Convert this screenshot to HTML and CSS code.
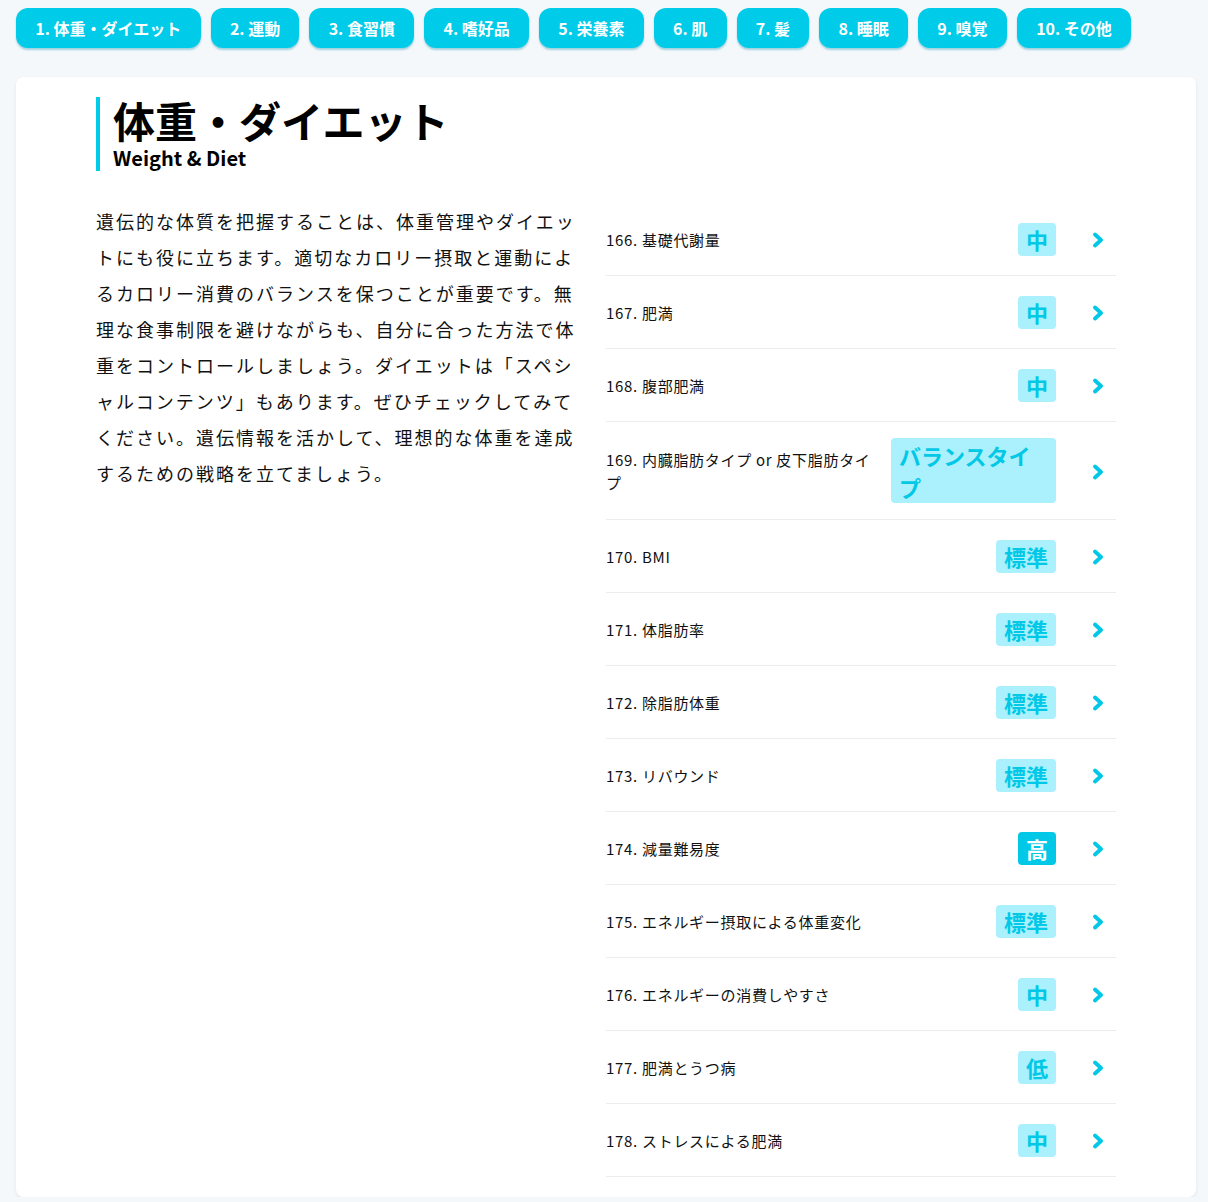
FILE: index.html
```html
<!DOCTYPE html>
<html lang="ja">
<head>
<meta charset="utf-8">
<title>体重・ダイエット</title>
<link rel="stylesheet" href="styles.css">
</head>
<body>
<div class="page">
  <nav class="tabs">
    <a class="tab">1. 体重・ダイエット</a>
    <a class="tab">2. 運動</a>
    <a class="tab">3. 食習慣</a>
    <a class="tab">4. 嗜好品</a>
    <a class="tab">5. 栄養素</a>
    <a class="tab">6. 肌</a>
    <a class="tab">7. 髪</a>
    <a class="tab">8. 睡眠</a>
    <a class="tab">9. 嗅覚</a>
    <a class="tab">10. その他</a>
  </nav>
  <section class="card">
    <header class="heading">
      <h1 class="title">体重・ダイエット</h1>
      <p class="subtitle">Weight &amp; Diet</p>
    </header>
    <div class="content">
      <p class="lead">遺伝的な体質を把握することは、体重管理やダイエットにも役に立ちます。適切なカロリー摂取と運動によるカロリー消費のバランスを保つことが重要です。無理な食事制限を避けながらも、自分に合った方法で体重をコントロールしましょう。ダイエットは「スペシャルコンテンツ」もあります。ぜひチェックしてみてください。遺伝情報を活かして、理想的な体重を達成するための戦略を立てましょう。</p>
      <ul class="list">
        <li class="row"><span class="label">166. 基礎代謝量</span><span class="badge">中</span><span class="chev"><svg viewBox="0 0 12 16" width="12" height="16"><path d="M3 2.5 L9 8 L3 13.5"/></svg></span></li>
        <li class="row"><span class="label">167. 肥満</span><span class="badge">中</span><span class="chev"><svg viewBox="0 0 12 16" width="12" height="16"><path d="M3 2.5 L9 8 L3 13.5"/></svg></span></li>
        <li class="row"><span class="label">168. 腹部肥満</span><span class="badge">中</span><span class="chev"><svg viewBox="0 0 12 16" width="12" height="16"><path d="M3 2.5 L9 8 L3 13.5"/></svg></span></li>
        <li class="row"><span class="label">169. 内臓脂肪タイプ or 皮下脂肪タイプ</span><span class="badge badge-wide">バランスタイプ</span><span class="chev"><svg viewBox="0 0 12 16" width="12" height="16"><path d="M3 2.5 L9 8 L3 13.5"/></svg></span></li>
        <li class="row"><span class="label">170. BMI</span><span class="badge">標準</span><span class="chev"><svg viewBox="0 0 12 16" width="12" height="16"><path d="M3 2.5 L9 8 L3 13.5"/></svg></span></li>
        <li class="row"><span class="label">171. 体脂肪率</span><span class="badge">標準</span><span class="chev"><svg viewBox="0 0 12 16" width="12" height="16"><path d="M3 2.5 L9 8 L3 13.5"/></svg></span></li>
        <li class="row"><span class="label">172. 除脂肪体重</span><span class="badge">標準</span><span class="chev"><svg viewBox="0 0 12 16" width="12" height="16"><path d="M3 2.5 L9 8 L3 13.5"/></svg></span></li>
        <li class="row"><span class="label">173. リバウンド</span><span class="badge">標準</span><span class="chev"><svg viewBox="0 0 12 16" width="12" height="16"><path d="M3 2.5 L9 8 L3 13.5"/></svg></span></li>
        <li class="row"><span class="label">174. 減量難易度</span><span class="badge badge-high">高</span><span class="chev"><svg viewBox="0 0 12 16" width="12" height="16"><path d="M3 2.5 L9 8 L3 13.5"/></svg></span></li>
        <li class="row"><span class="label">175. エネルギー摂取による体重変化</span><span class="badge">標準</span><span class="chev"><svg viewBox="0 0 12 16" width="12" height="16"><path d="M3 2.5 L9 8 L3 13.5"/></svg></span></li>
        <li class="row"><span class="label">176. エネルギーの消費しやすさ</span><span class="badge">中</span><span class="chev"><svg viewBox="0 0 12 16" width="12" height="16"><path d="M3 2.5 L9 8 L3 13.5"/></svg></span></li>
        <li class="row"><span class="label">177. 肥満とうつ病</span><span class="badge">低</span><span class="chev"><svg viewBox="0 0 12 16" width="12" height="16"><path d="M3 2.5 L9 8 L3 13.5"/></svg></span></li>
        <li class="row"><span class="label">178. ストレスによる肥満</span><span class="badge">中</span><span class="chev"><svg viewBox="0 0 12 16" width="12" height="16"><path d="M3 2.5 L9 8 L3 13.5"/></svg></span></li>
      </ul>
    </div>
  </section>
</div>
</body>
</html>
```
FILE: styles.css
```css
* { box-sizing: border-box; }
html, body {
  margin: 0;
  padding: 0;
  background: #f5f8fb;
  font-family: "Noto Sans CJK JP", "Noto Sans", sans-serif;
  color: #111;
}
.page {
  padding: 8px 12px 0 16px;
}
.tabs {
  display: flex;
  gap: 10px;
  flex-wrap: wrap;
}
.tab {
  display: block;
  height: 40px;
  line-height: 40px;
  padding: 0 19.25px;
  background: #00cbe8;
  color: #fff;
  font-weight: 700;
  font-size: 16px;
  border-radius: 12px;
  box-shadow: 0 2px 2px rgba(0, 140, 170, 0.35);
  white-space: nowrap;
}
.card {
  margin-top: 29px;
  background: #fff;
  border-radius: 8px;
  box-shadow: 0 2px 4px rgba(0, 0, 0, 0.07);
  padding: 20px 80px 20px 80px;
}
.heading {
  border-left: 4px solid #00cbe8;
  padding-left: 13px;
}
.title {
  margin: 0;
  font-size: 42px;
  line-height: 46px;
  font-weight: 700;
  color: #000;
}
.subtitle {
  margin: 0;
  padding-top: 2px;
  font-size: 20px;
  line-height: 26px;
  font-weight: 700;
  color: #000;
}
.content {
  margin-top: 32px;
  display: grid;
  grid-template-columns: 482px 510px;
  column-gap: 28px;
  align-items: start;
}
.lead {
  margin: 0;
  font-size: 18px;
  line-height: 36px;
  letter-spacing: 2px;
  color: #111;
}
.list {
  list-style: none;
  margin: 0;
  padding: 0;
}
.row {
  display: flex;
  align-items: center;
  min-height: 73px;
  padding: 16px 0;
  border-bottom: 1px solid #e9edf0;
}
.label {
  flex: 1 1 0;
  min-width: 0;
  font-size: 15px;
  line-height: 23px;
  letter-spacing: 0.7px;
  color: #111;
  padding-right: 16px;
}
.badge {
  flex: 0 0 auto;
  background: #aaf0fd;
  color: #00c8e6;
  font-weight: 700;
  font-size: 22px;
  line-height: 32px;
  padding: 0.5px 8px;
  border-radius: 4px;
}
.badge-wide {
  width: 165px;
}
.badge-high {
  background: #00c8e6;
  color: #fff;
}
.chev {
  flex: 0 0 60px;
  display: flex;
  justify-content: flex-end;
  padding-right: 12px;
  padding-top: 2px;
}
.chev svg {
  display: block;
}
.chev path {
  fill: none;
  stroke: #00c8e6;
  stroke-width: 3.8;
  stroke-linecap: round;
  stroke-linejoin: round;
}
```
